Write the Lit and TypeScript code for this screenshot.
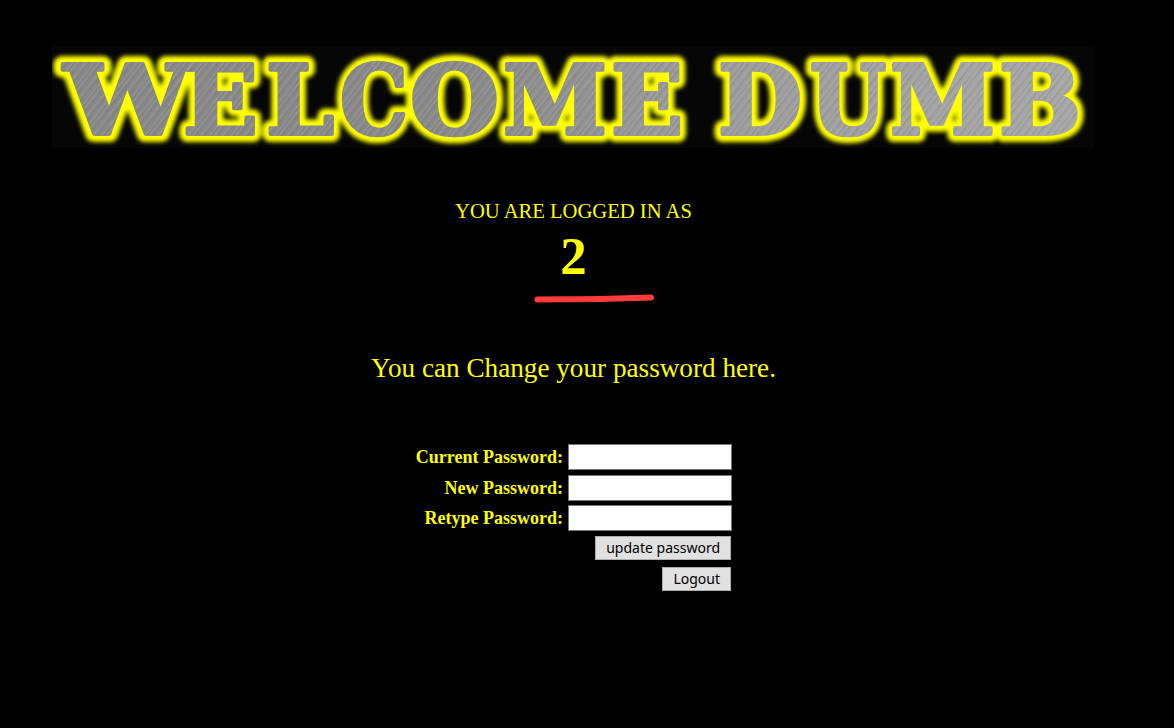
import { LitElement, html, css, svg } from "lit";
import { customElement } from "lit/decorators.js";

const LETTERS: [string, number, number][] = [
  ["W", 12, 127], ["E", 131, 75], ["L", 214, 68], ["C", 288, 68], ["O", 358, 89],
  ["M", 451, 104], ["E", 559, 72], ["D", 666, 84], ["U", 758, 76], ["M", 838, 105], ["B", 947, 82],
];

@customElement("app-root")
export class AppRoot extends LitElement {
  static styles = css`
    :host { display: block; min-height: 728px; background: #000; color: #ff0; font-family: "Liberation Serif", serif; }
    .page { width: 1147px; padding-top: 46px; display: flex; flex-direction: column; align-items: center; }
    .banner { display: block; align-self: flex-start; margin-left: 52px; width: 1042px; height: 102px; background: #060606; }
    .word { text-rendering: geometricPrecision; }
    .logged { margin-top: 51px; font-size: 20.6px; line-height: 24px; }
    .user { margin-top: 4px; font-size: 53px; line-height: 58px; font-weight: bold; }
    .scribble { display: block; margin-top: 8px; width: 120px; height: 10px; margin-left: 40px; }
    .change { margin-top: 49px; font-size: 27.2px; line-height: 32px; }
    form { align-self: flex-start; margin-top: 60px; margin-left: 393px; display: grid; grid-template-columns: 170px 164px; column-gap: 5px; row-gap: 4.5px; align-items: center; }
    label { font-size: 18px; line-height: 26px; font-weight: bold; text-align: right; }
    input { box-sizing: border-box; width: 164px; height: 26px; margin: 0; padding: 0 2px; background: #fff; border: 1px solid #767676; }
    button { grid-column: 1 / 3; justify-self: end; box-sizing: border-box; height: 24px; margin: 0 1px 2.5px 0; padding: 0 10px; background: #e1e1e1; border: 1px solid #adadad; color: #000; font-family: "Noto Sans", sans-serif; font-size: 14px; line-height: 20px; }
  `;

  render() {
    return html`
      <div class="page">
        <svg class="banner" viewBox="0 0 1042 102" role="img" aria-label="WELCOME DUMB">
          <defs>
            <linearGradient id="metal" gradientUnits="userSpaceOnUse" x1="0" y1="0" x2="1042" y2="0">
              <stop offset="0" stop-color="#888" />
              <stop offset="0.4" stop-color="#8a8a8a" />
              <stop offset="0.62" stop-color="#9c9c9c" />
              <stop offset="1" stop-color="#a8a8a8" />
            </linearGradient>
            <pattern id="brush" width="17" height="17" patternUnits="userSpaceOnUse" patternTransform="rotate(-52)">
              <path d="M0 2.500H17M0 9.500H17M0 13H17" stroke="#c8c8c8" stroke-opacity=".18" stroke-width="1" />
              <path d="M0 5.500H17M0 11H17M0 15.500H17" stroke="#555" stroke-opacity=".16" stroke-width="1" />
            </pattern>
            <filter id="blur" x="-10%" y="-30%" width="120%" height="160%"><feGaussianBlur stdDeviation="2.2" /></filter>
            <g id="word" class="word" font-family="DejaVu Serif, serif" font-weight="bold" font-size="96" stroke-linejoin="round">
              ${LETTERS.map(([c, x, w]) => svg`<text x=${x} y="88" textLength=${w} lengthAdjust="spacingAndGlyphs">${c}</text>`)}
            </g>
          </defs>
          <use href="#word" fill="#ff0" stroke="#ff0" stroke-width="16" filter="url(#blur)" />
          <use href="#word" fill="url(#metal)" stroke="url(#metal)" stroke-width="4" />
          <use href="#word" fill="url(#brush)" stroke="url(#brush)" stroke-width="4" />
        </svg>
        <div class="logged">YOU ARE LOGGED IN AS</div>
        <div class="user">2</div>
        <svg class="scribble" viewBox="0 0 120 10">
          <path d="M3.500 6.500 C30 6.200 50 6.500 75 5.800 C90 5.300 105 5 117 4.500" fill="none" stroke="#ff3b3b" stroke-width="6" stroke-linecap="round" />
        </svg>
        <div class="change">You can Change your password here.</div>
        <form>
          <label>Current Password:</label><input type="password" />
          <label>New Password:</label><input type="password" />
          <label>Retype Password:</label><input type="password" />
          <button type="button">update password</button>
          <button type="button">Logout</button>
        </form>
      </div>
    `;
  }
}
